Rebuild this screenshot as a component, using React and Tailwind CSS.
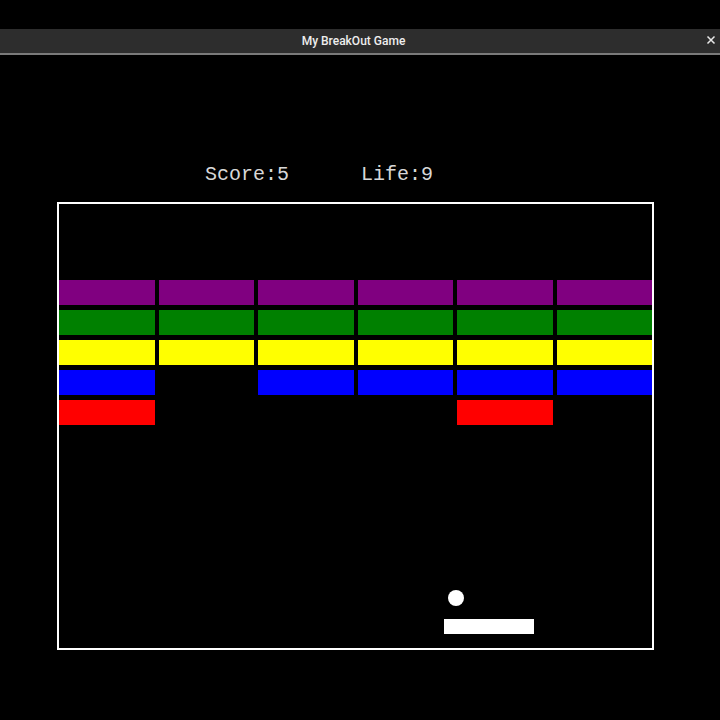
import React from "react";

const rows = [
  { color: "bg-[#800080]", cells: [1, 1, 1, 1, 1, 1] },
  { color: "bg-[#008000]", cells: [1, 1, 1, 1, 1, 1] },
  { color: "bg-[#ffff00]", cells: [1, 1, 1, 1, 1, 1] },
  { color: "bg-[#0000ff]", cells: [1, 0, 1, 1, 1, 1] },
  { color: "bg-[#ff0000]", cells: [1, 0, 0, 0, 1, 0] },
];

const TitleBar = () => (
  <div>
    <div className="relative h-[24px] bg-[#2d2d2d] flex items-center justify-center pr-[13px]">
      <span
        className="text-[12px] font-medium text-[#eeeeee] leading-none"
        style={{ fontFamily: "Roboto, 'Noto Sans', sans-serif" }}
      >
        My BreakOut Game
      </span>
      <svg
        className="absolute right-[4px] top-[6px]"
        width="10"
        height="10"
        viewBox="0 0 10 10"
      >
        <path d="M1.5 1.5 L8.5 8.5 M8.5 1.5 L1.5 8.5" stroke="#e8e8e8" strokeWidth="1.5" />
      </svg>
    </div>
    <div className="h-[2px] bg-[#7a7a7a]" />
  </div>
);

const Board = () => (
  <div className="relative ml-[57px] w-[597px] h-[448px] border-2 border-white">
    <div className="mt-[76px] grid grid-cols-6 gap-x-[4px] gap-y-[5px]">
      {rows.map((row, r) =>
        row.cells.map((on, c) => (
          <div key={`${r}-${c}`} className={`h-[25px] ${on ? row.color : ""}`} />
        ))
      )}
    </div>
    {/* ball */}
    <div className="absolute left-[389px] top-[386px] w-[16px] h-[16px] rounded-full bg-white" />
    {/* paddle */}
    <div className="absolute left-[385px] top-[415px] w-[90px] h-[15px] bg-white" />
  </div>
);

export default function App() {
  return (
    <div className="w-[720px] h-[720px] bg-black overflow-hidden pt-[29px]">
      <TitleBar />
      <div
        className="mt-[108px] ml-[205px] h-[24px] text-[20px] leading-[24px] text-[#d8d8d8] whitespace-pre"
        style={{ fontFamily: "'Liberation Mono', 'Courier New', monospace" }}
      >
        {"Score:5      Life:9"}
      </div>
      <div className="mt-[15px]">
        <Board />
      </div>
    </div>
  );
}
